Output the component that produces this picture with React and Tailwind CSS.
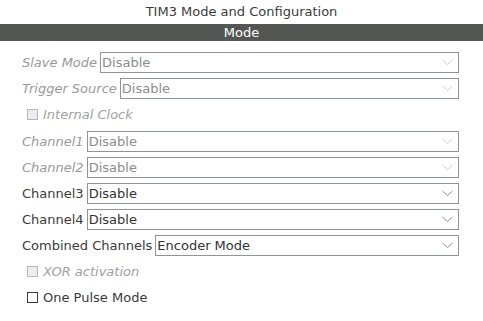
import React from "react";

const Chevron = ({ disabled }) => (
  <svg width="11" height="7" viewBox="0 0 11 7" className="shrink-0">
    <path d="M0.5 1 L5.5 5.5 L10.5 1" fill="none" stroke={disabled ? "#cfd2d4" : "#8a8f93"} strokeWidth="1" />
  </svg>
);

const SelectRow = ({ label, value, disabled, italic }) => (
  <div className="flex h-[26px] items-center">
    <span className={`mr-[3px] whitespace-nowrap ${italic ? "italic" : ""} ${disabled ? "text-[#9a9a9a]" : "text-[#3a3a3a]"}`}>
      {label}
    </span>
    <div className="flex h-[21px] flex-1 items-center justify-between border border-[#8e9498] bg-white pl-[1px] pr-[5px]">
      <span className={disabled ? "text-[#8c8c8c]" : "text-[#333333]"}>{value}</span>
      <Chevron disabled={disabled} />
    </div>
  </div>
);

const CheckRow = ({ label, disabled, h = "h-[26px]" }) => (
  <div className={`flex ${h} items-center pl-[5px]`}>
    <span
      className={`mr-[5px] h-[11px] w-[11px] border ${disabled ? "border-[#b4b8ba] bg-[#ebedee]" : "border-[#3a3a3a] bg-white"}`}
    />
    <span className={disabled ? "italic text-[#a0a0a0]" : "text-[#3a3a3a]"}>{label}</span>
  </div>
);

export default function App() {
  return (
    <div className="h-[321px] w-[483px] overflow-hidden bg-white text-[13px] leading-none" style={{ fontFamily: "'DejaVu Sans', sans-serif" }}>
      <div className="flex h-[24px] items-center justify-center pb-[2px] text-[#3c3c3c]">TIM3 Mode and Configuration</div>
      <div className="flex h-[17px] items-center justify-center bg-[#545654] text-white">Mode</div>
      <div className="ml-[22px] mr-[24px] mt-[8px] flex flex-col">
        <SelectRow label="Slave Mode" value="Disable" disabled italic />
        <SelectRow label="Trigger Source" value="Disable" disabled italic />
        <CheckRow label="Internal Clock" disabled h="h-[27px]" />
        <SelectRow label="Channel1" value="Disable" disabled italic />
        <SelectRow label="Channel2" value="Disable" disabled italic />
        <SelectRow label="Channel3" value="Disable" />
        <SelectRow label="Channel4" value="Disable" />
        <SelectRow label="Combined Channels" value="Encoder Mode" />
        <CheckRow label="XOR activation" disabled />
        <CheckRow label="One Pulse Mode" />
      </div>
    </div>
  );
}
